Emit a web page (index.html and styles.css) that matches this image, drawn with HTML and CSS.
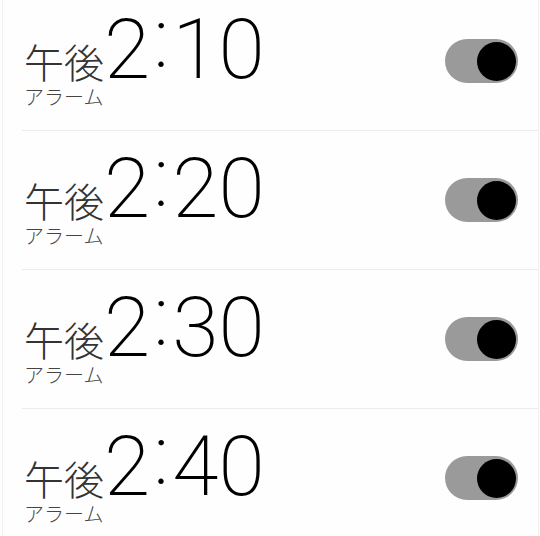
FILE: index.html
```html
<!DOCTYPE html>
<html lang="ja">
<head>
  <meta charset="UTF-8" />
  <title>アラーム</title>
  <link rel="stylesheet" href="styles.css">
</head>
<body>

  <div class="screen">
    <ul class="alarms">
      <li class="alarm">
        <div class="alarm-row">
          <div class="info">
            <div class="time"><span class="ampm">午後</span>2<span class="colon">:</span>10</div>
            <div class="label">アラーム</div>
          </div>
          <span class="toggle"><span class="knob"></span></span>
        </div>
      </li>
      <li class="alarm">
        <div class="alarm-row">
          <div class="info">
            <div class="time"><span class="ampm">午後</span>2<span class="colon">:</span>20</div>
            <div class="label">アラーム</div>
          </div>
          <span class="toggle"><span class="knob"></span></span>
        </div>
      </li>
      <li class="alarm">
        <div class="alarm-row">
          <div class="info">
            <div class="time"><span class="ampm">午後</span>2<span class="colon">:</span>30</div>
            <div class="label">アラーム</div>
          </div>
          <span class="toggle"><span class="knob"></span></span>
        </div>
      </li>
      <li class="alarm">
        <div class="alarm-row">
          <div class="info">
            <div class="time"><span class="ampm">午後</span>2<span class="colon">:</span>40</div>
            <div class="label">アラーム</div>
          </div>
          <span class="toggle"><span class="knob"></span></span>
        </div>
      </li>
    </ul>
  </div>

</body>
</html>
```
FILE: styles.css
```css
body {
  margin: 0;
  background: #fefefe;
  font-family: Roboto, "Noto Sans CJK JP", sans-serif;
  color: #111;
  overflow: hidden;
}
.screen {
  height: 536px;
  margin: 0 1px 0 2px;
  border-left: 1px solid #f2f2f2;
  border-right: 1px solid #f2f2f2;
  overflow: hidden;
}
.alarms {
  list-style: none;
  margin: -8px 0 0;
  padding: 0;
}
.alarm {
  padding-left: 19px;
}
.alarm-row {
  display: flex;
  align-items: center;
  justify-content: space-between;
  height: 138px;
  padding: 0 20px 0 2px;
  border-bottom: 1px solid #ebebeb;
}
.info {
  margin-bottom: 3px;
}
.time {
  font-size: 84px;
  font-weight: 200;
  line-height: 74px;
  white-space: nowrap;
  color: #000;
}
.colon {
  vertical-align: 0.12em;
  line-height: 0;
  margin: 0 3px;
}
.ampm {
  font-family: "Noto Sans CJK JP", sans-serif;
  font-size: 40px;
  font-weight: 300;
  line-height: 1;
  color: #333;
}
.label {
  font-family: "Noto Sans CJK JP", sans-serif;
  font-size: 20px;
  font-weight: 300;
  line-height: 20px;
  color: #444;
}
.toggle {
  display: flex;
  justify-content: flex-end;
  align-items: center;
  width: 73px;
  height: 44px;
  padding: 0 2px;
  box-sizing: border-box;
  border-radius: 22px;
  background: #9a9a9a;
}
.knob {
  width: 39px;
  height: 39px;
  border-radius: 50%;
  background: #000;
}
```
